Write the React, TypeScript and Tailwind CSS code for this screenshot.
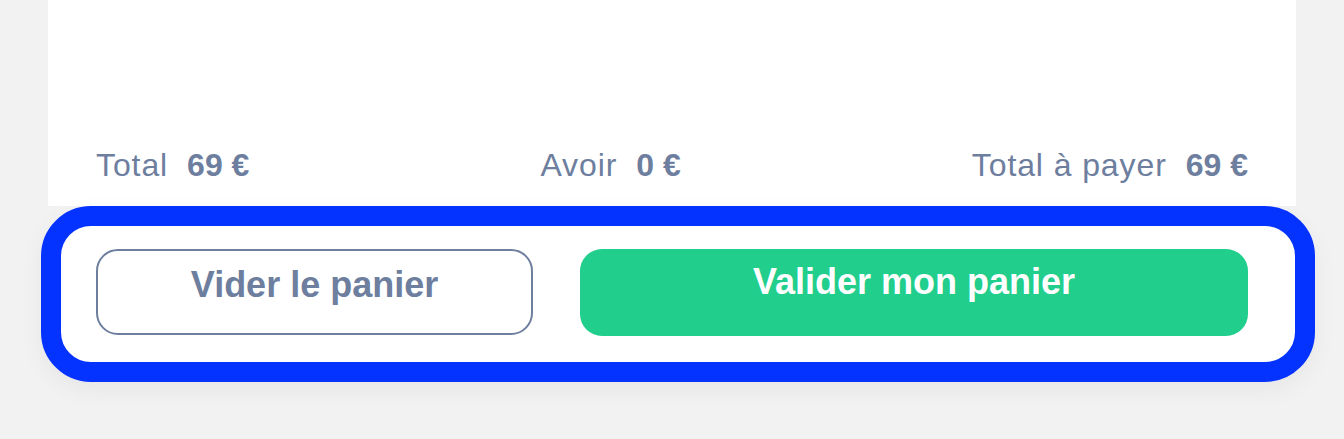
export default function App() {
  const totals = [
    { label: "Total", value: "69 €" },
    { label: "Avoir", value: "0 €" },
    { label: "Total à payer", value: "69 €" },
  ]

  return (
    <div className="h-screen w-full overflow-hidden bg-[#f2f2f2] font-['Liberation_Sans',Arial,sans-serif]">
      {/* Cart card */}
      <div className="ml-[48px] flex h-[206px] w-[1248px] flex-col justify-end bg-white px-[48px] pb-[23px]">
        <div className="flex items-center justify-between text-[32px] leading-[36px] text-[#6d7e9e]">
          {totals.map((t) => (
            <div key={t.label} className="flex whitespace-nowrap">
              <span className="tracking-[0.9px]">{t.label}</span>
              <span className="ml-[19px] font-bold">{t.value}</span>
            </div>
          ))}
        </div>
      </div>

      {/* Footer actions */}
      <div className="ml-[41px] flex h-[176px] w-[1274px] gap-[47px] rounded-[50px] border-[20px] border-[#0433ff] bg-white pl-[35px] pr-[47px] pt-[23px] shadow-[0_8px_24px_rgba(0,0,0,0.05)]">
        <button className="flex h-[86px] w-[437px] shrink-0 justify-center rounded-[22px] border-2 border-[#6d7e9e] bg-white pt-[14px] text-[36px] font-bold leading-[40px] text-[#6d7e9e]">
          Vider le panier
        </button>
        <button className="flex h-[87px] flex-1 justify-center rounded-[22px] bg-[#21ce8c] pt-[13px] text-[36px] font-bold leading-[40px] text-white">
          Valider mon panier
        </button>
      </div>
    </div>
  )
}
